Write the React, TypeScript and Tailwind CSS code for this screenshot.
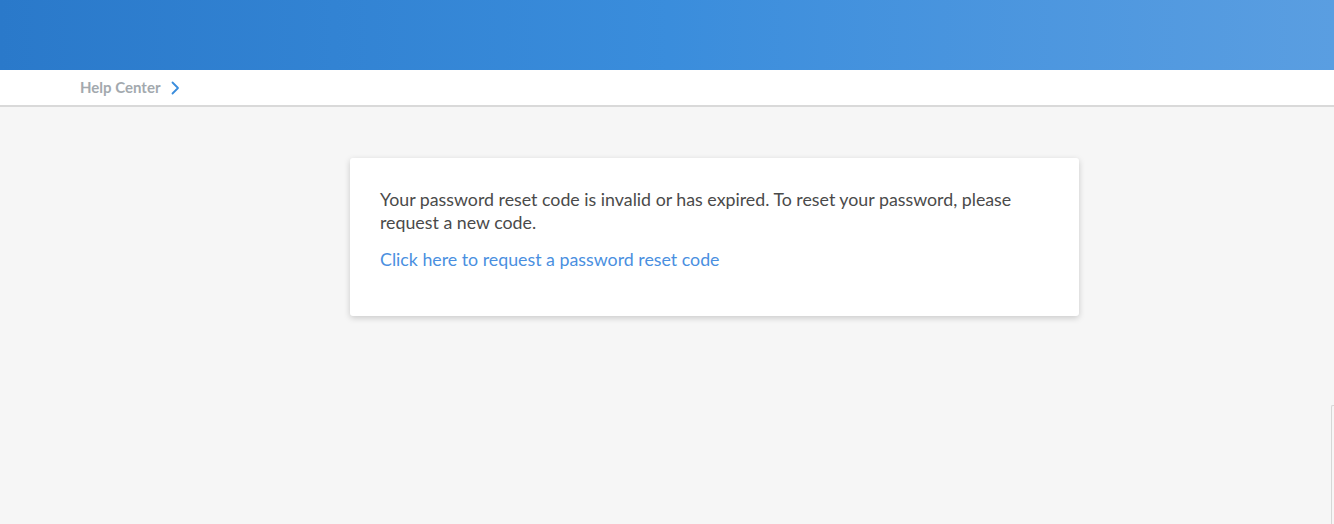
import React from "react";

export default function App() {
  return (
    <div className="relative min-h-screen w-full bg-[#f6f6f6] font-['Lato',sans-serif]">
      {/* header */}
      <div className="h-[70px] w-full bg-gradient-to-r from-[#2a79ca] via-[#3a8ddc] to-[#5a9ee1]" />

      {/* breadcrumb */}
      <div className="h-[37px] w-full bg-white border-b-2 border-[#d9d9d9] flex items-center pl-[80px]">
        <a href="#" className="text-[15px] font-bold text-[#a3a9ae] flex items-center gap-[11px]">
          Help Center
          <svg width="9" height="14" viewBox="0 0 9 14" fill="none">
            <path d="M1.5 1.5L7 7L1.5 12.5" stroke="#3a8ddc" strokeWidth="1.8" strokeLinecap="round" strokeLinejoin="round" />
          </svg>
        </a>
      </div>

      {/* card */}
      <div className="flex justify-center pt-[51px] pl-[95px]">
        <div className="w-[729px] bg-white rounded-[3px] shadow-[0_2px_6px_rgba(0,0,0,0.18)] px-[30px] pt-[30px] pb-[45px]">
          <p className="text-[17.8px] leading-[23px] text-[#4a4a4a]">
            Your password reset code is invalid or has expired. To reset your password, please request a new code.
          </p>
          <a href="#" className="block mt-[14px] text-[17.8px] leading-[23px] text-[#4a8fdf]">
            Click here to request a password reset code
          </a>
        </div>
      </div>

      {/* widget edge at right */}
      <div className="absolute right-0 top-[405px] bottom-0 w-[3px] border-l border-t border-[#d6d6d6] rounded-tl-[2px] bg-[#f6f6f6]" />
    </div>
  );
}
